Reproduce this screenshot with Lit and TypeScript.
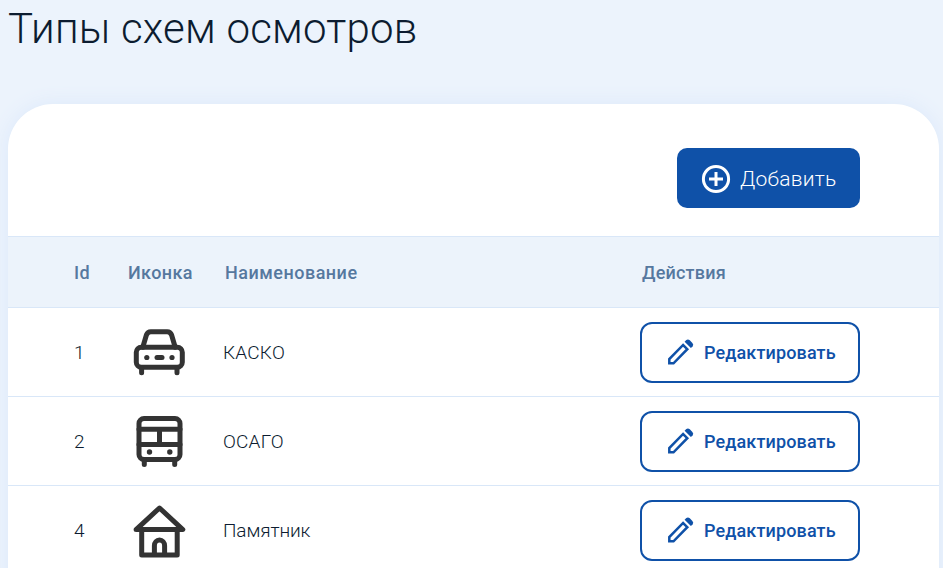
import { LitElement, html, css, svg } from "lit";
import { customElement } from "lit/decorators.js";

const car = svg`<g fill="none" stroke="#333" stroke-width="5" stroke-linecap="round" stroke-linejoin="round">
  <path d="M9.8 22.3 L13.4 10 Q14.6 6.8 17.8 6.8 H34.2 Q37.4 6.8 38.6 10 L42.2 22.3"/>
  <rect x="3.3" y="22.3" width="46" height="20" rx="5"/>
  <path d="M8.6 43.5v4.3M44 43.5v4.3"/><path d="M24 32.5h5"/></g>
  <g fill="#333"><circle cx="13.8" cy="32.5" r="2.6"/><circle cx="39" cy="32.5" r="2.6"/></g>`;

const bus = svg`<g fill="none" stroke="#333" stroke-width="5" stroke-linecap="round" stroke-linejoin="round">
  <rect x="6" y="4.5" width="41" height="41" rx="5"/>
  <path d="M6 15.3h41M6 30.5h41M26.5 15.3v15.2"/><path d="M11.3 46v4.6M41.7 46v4.6"/></g>
  <g fill="#333"><circle cx="16.5" cy="38" r="2.7"/><circle cx="36.8" cy="38" r="2.7"/></g>`;

const house = svg`<g fill="none" stroke="#333" stroke-width="5" stroke-linecap="round" stroke-linejoin="round">
  <path d="M3.1 26.6 L26.5 5 L49.8 26.6 Z"/><path d="M8.7 26.6V52H44.2V26.6"/>
  <path d="M21.4 51V42.7a5.1 5.8 0 0 1 10.2 0V51"/></g>`;

const rows = [
  { id: 1, icon: car, name: "КАСКО", kind: "kasko" },
  { id: 2, icon: bus, name: "ОСАГО", kind: "osago" },
  { id: 4, icon: house, name: "Памятник", kind: "monument" },
];

@customElement("app-root")
export class AppRoot extends LitElement {
  static styles = css`
    * { box-sizing: border-box; }
    :host {
      display: block; height: 568px; overflow: hidden; background: #ecf3fc;
      font-family: Roboto, "Liberation Sans", sans-serif; color: #0c1c30;
    }
    h1 { margin: 0; padding: 5px 0 0 8px; height: 104px; font-size: 42px; line-height: 48px;
      font-weight: 300; letter-spacing: 0.22px; white-space: nowrap; }
    .card { width: 931px; height: 520px; margin-left: 8px; background: #fff;
      border-radius: 45px 45px 0 0; box-shadow: 0 0 20px #dce9fb; }
    .toolbar { height: 132px; padding: 44px 79px 0 0; display: flex; justify-content: flex-end; }
    button { font-family: inherit; margin: 0; display: flex; align-items: center; white-space: nowrap; }
    .add { width: 183px; height: 60px; border: 0; border-radius: 10px; background: #0f51a8; color: #fff;
      padding: 1px 0 0 23px; gap: 8px; font-size: 21px; font-weight: 300; letter-spacing: 0.25px; }
    .add svg { width: 32px; height: 32px; flex: none; }
    .row { display: grid; grid-template-columns: 54px 96px 417px 220px; align-items: center;
      padding-left: 65px; height: 89px; border-bottom: 1px solid #d9e7f8; font-size: 19px; font-weight: 300; }
    .head { height: 72px; background: #ecf3fb; border-top: 1px solid #d9e7f8; color: #56789f;
      font-size: 18px; font-weight: 500; letter-spacing: 0.4px; }
    .head .name { padding-left: 2px; letter-spacing: 0.5px; }
    .head .label { padding-left: 1px; }
    .head .actions { padding-left: 2px; letter-spacing: 0.2px; }
    .icon { display: block; width: 52px; height: 54px; margin-left: 6px; overflow: visible; }
    .kasko, .osago { letter-spacing: 0.2px; }
    .monument { letter-spacing: -0.1px; }
    .edit { width: 220px; height: 61px; border: 2px solid #0f51a8; border-radius: 12px; background: #fff;
      color: #0f51a8; padding: 0 0 0 23px; gap: 7px; font-size: 18px; font-weight: 500; letter-spacing: 0.13px; }
    .edit svg { width: 32px; height: 32px; flex: none; }
    .id { padding-left: 1px; }
  `;

  render() {
    return html`
      <h1><span>Типы схем осмотров</span></h1>
      <main class="card">
        <div class="toolbar">
          <button class="add">
            <svg viewBox="0 0 32 32" fill="none" stroke="#fff" stroke-width="3">
              <circle cx="16" cy="16" r="12.6"/><path d="M16 9v14M9 16h14"/>
            </svg><span>Добавить</span>
          </button>
        </div>
        <div class="row head">
          <span class="id">Id</span><span class="label">Иконка</span><span class="name">Наименование</span><span class="actions">Действия</span>
        </div>
        ${rows.map((r) => html`
          <div class="row">
            <span class="id">${r.id}</span>
            <svg class="icon" viewBox="0 0 52 54">${r.icon}</svg>
            <span class=${r.kind}>${r.name}</span>
            <button class="edit">
              <svg viewBox="0 0 32 32">
                <path fill="none" stroke="#0f51a8" stroke-width="2.5" d="M4.3 27.3v-4.2L18.1 9l4.2 4.2L8.5 27.3z"/>
                <path fill="#0f51a8" d="M19.6 5.8l1.7-1.7q1.6-1.4 3.5.2l2.6 2.6q1.6 1.8.2 3.5l-1.7 1.7z"/>
              </svg><span>Редактировать</span>
            </button>
          </div>`)}
      </main>`;
  }
}
